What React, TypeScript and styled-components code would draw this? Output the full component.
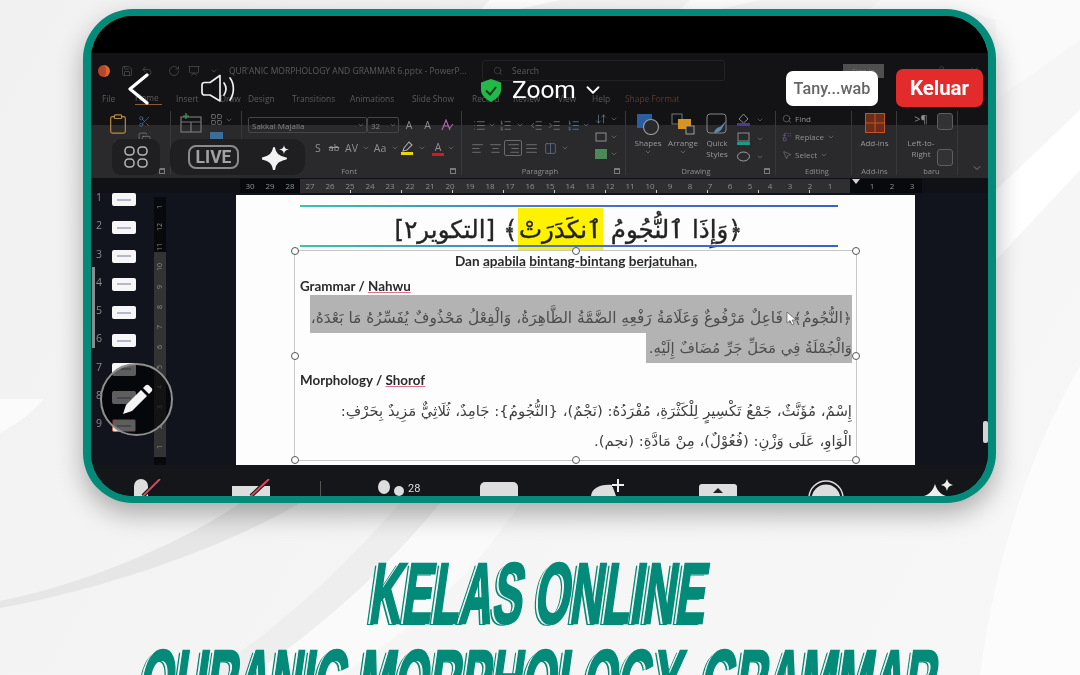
import React from "react";
import styled, { createGlobalStyle } from "styled-components";
import { Save, Undo2, RotateCw, Presentation, Search, ChevronDown, Clipboard, Scissors, Copy, LayoutGrid, AlignLeft, AlignCenter, AlignRight, AlignJustify, List, ListOrdered, IndentIncrease, IndentDecrease, ArrowDownUp, Columns2, Replace, MousePointer2, X, User } from "lucide-react";

const Global = createGlobalStyle`
  html, body { margin: 0; padding: 0; width: 1080px; height: 675px; overflow: hidden; background: #f5f5f5; }
  body { font-family: "Roboto", "Liberation Sans", sans-serif; }
  * { box-sizing: border-box; }
`;

const Page = styled.div`
  position: relative; width: 1080px; height: 675px; overflow: hidden;
  background: linear-gradient(120deg, #f1f1f1 0%, #f5f5f5 50%, #f7f7f7 100%);
`;
const Swooshes = styled.svg`position: absolute; inset: 0; width: 1080px; height: 675px;`;
const Content = styled.div`
  position: relative; display: flex; flex-direction: column; align-items: flex-start;
  padding: 9px 0 0 83px; height: 675px;
`;
const Frame = styled.section`
  position: relative; width: 913px; height: 494px; flex: none;
  border-style: solid; border-color: #038a78; border-width: 7px 8px; border-radius: 50px; background: #000;
  box-shadow: 0 11px 26px rgba(0,0,0,.3);
  overflow: hidden;
`;
const Video = styled.div`
  position: relative; display: flex; flex-direction: column; height: 100%; filter: blur(.5px);
  font-family: "Open Sans", "Liberation Sans", sans-serif;
`;
const TopBlack = styled.div`height: 37px; flex: none; background: #000;`;
const TitleBar = styled.div`
  height: 35px; flex: none; background: #131316; display: flex; align-items: center;
  padding-left: 7px; color: #5b5b5d; font-size: 8.5px;
`;
const AppDot = styled.span`
  width: 12px; height: 12px; border-radius: 50%; background: #b8452a; flex: none; margin-right: 11px;
  border-right: 4px solid #d9672a;
`;
const Qat = styled.div`display: flex; align-items: center; width: 108px; flex: none;`;
const QatItem = styled.span<{ $w: number }>`width: ${p => p.$w}px; flex: none; display: flex;`;
const DocTitle = styled.span`width: 253px; flex: none; white-space: nowrap;`;
const SearchBox = styled.div`
  width: 243px; height: 21px; flex: none; border: 1px solid #232326; border-radius: 3px;
  display: flex; align-items: center; gap: 9px; padding-left: 10px;
`;
const SignIn = styled.span`
  margin-left: 118px; width: 41px; height: 14px; background: #4f4f50; color: #77777a; flex: none;
  display: flex; align-items: center; justify-content: center; font-size: 7.5px;
`;
const WindowIcons = styled.span`margin-left: 52px; display: flex; gap: 22px; align-items: center; color: #4a4a4c;`;
const Tabs = styled.div`
  height: 20px; flex: none; background: #131316; display: flex; align-items: center;
  padding-left: 11px; font-size: 8.4px; white-space: nowrap;
`;
const Tab = styled.span<{ $w: number; $orange?: boolean }>`
  width: ${p => p.$w}px; flex: none; line-height: 13px;
  color: ${p => (p.$orange ? "#5d3a28" : "#5b5b5e")};
`;
const ActiveLabel = styled.span`display: inline-block; border-bottom: 1px solid #8a5a30; line-height: 12px; padding-right: 3px;`;
const Ribbon = styled.div`
  height: 70px; flex: none; display: flex;
  background: linear-gradient(#131316 0, #131316 17px, #2a2a2c 17px, #2a2a2c 100%);
  color: #909092; font-size: 8px;
`;
const Group = styled.div<{ $w: number; $pl?: number }>`
  width: ${p => p.$w}px; flex: none; display: flex; flex-direction: column; position: relative;
  padding: 5px 0 0 ${p => p.$pl ?? 0}px;
  &::after { content: ""; position: absolute; right: 0; top: 3px; bottom: 3px; width: 1px; background: #38383a; }
`;
const GroupBody = styled.div`flex: 1; min-height: 0; display: flex; align-items: flex-start;`;
const GroupName = styled.div<{ $pr?: number }>`
  height: 13px; line-height: 12px; text-align: center; color: #8e8e90; font-size: 7.5px; flex: none; padding-right: ${p => p.$pr ?? 0}px;
`;
const Launcher = styled.span`
  position: absolute; right: 6px; bottom: 4px; width: 6px; height: 6px; border: 1px solid #7a7a7c; border-top-width: 2px;
`;
const Stack = styled.div<{ $gap?: number; $w?: number; $mt?: number; $ml?: number }>`
  display: flex; flex-direction: column; align-items: flex-start; flex: none;
  gap: ${p => p.$gap ?? 0}px; width: ${p => (p.$w ? `${p.$w}px` : "auto")};
  margin-top: ${p => p.$mt ?? 0}px; margin-left: ${p => p.$ml ?? 0}px;
`;
const Row = styled.div<{ $gap?: number; $mt?: number; $ml?: number }>`
  display: flex; align-items: center; white-space: nowrap; flex: none;
  gap: ${p => p.$gap ?? 0}px; margin-top: ${p => p.$mt ?? 0}px; margin-left: ${p => p.$ml ?? 0}px;
`;
const Cell = styled.span<{ $w: number; $boxed?: boolean }>`
  width: ${p => p.$w}px; height: 16px; flex: none; display: flex; align-items: center; justify-content: center; flex-direction: column;
  font-size: 10.5px; line-height: 12px;
  border: ${p => (p.$boxed ? "1px solid #6a6a6c" : "0")}; border-radius: 2px;
`;
const Strike = styled.span`text-decoration: line-through; color: #9a9a9c; font-size: 9px;`;
const BigTool = styled.div<{ $w: number }>`
  width: ${p => p.$w}px; flex: none; display: flex; flex-direction: column; align-items: center; line-height: 11px; text-align: center; color: #98989a;
`;
const IconBox = styled.div`height: 24px; display: flex; align-items: flex-start; justify-content: center; flex: none;`;
const Field = styled.div<{ $w: number }>`
  width: ${p => p.$w}px; height: 16px; border: 1px solid #454547; border-radius: 2px; color: #848486; flex: none;
  display: flex; align-items: center; padding: 0 1px 0 3px; font-size: 8px; justify-content: space-between;
`;
const Swatch = styled.span<{ $c: string }>`display: block; width: 12px; height: 3px; background: ${p => p.$c};`;
const Ltr = styled.span`font-size: 11px; color: #8d8d8f;`;
const OutlineBox = styled.span<{ $h: number }>`
  width: 16px; height: ${p => p.$h}px; border: 1px solid #5e5e60; border-radius: 3px; display: block; background: #323234;
`;
const RibbonEnd = styled.div`flex: 1; display: flex; justify-content: flex-end; align-items: flex-end; padding: 0 5px 4px 0; color: #8e8e90;`;
const Ruler = styled.div`
  height: 15px; flex: none; background: #0f1116; display: flex; align-items: center; padding-left: 149px; color: #8f8f8f; font-size: 8px;
`;
const RulerPart = styled.div<{ $w: number; $light?: boolean }>`
  width: ${p => p.$w}px; height: 14px; flex: none; display: flex; align-items: center;
  background: ${p => (p.$light
    ? "repeating-linear-gradient(90deg, transparent 0 50px, #c8c8c8 50px 51px) bottom / 100% 3px no-repeat, #2f2f31"
    : "#08090c")};
`;
const RulerNum = styled.span`width: 20px; flex: none; text-align: center;`;
const RulerMark = styled.span`width: 12px; flex: none; height: 14px; background: #08090c; display: flex; justify-content: center;`;
const RulerTri = styled.span`width: 0; height: 0; border: 4px solid transparent; border-top: 5px solid #d2d2d2;`;
const Main = styled.div`flex: 1; min-height: 0; background: #11141c; display: flex; position: relative;`;
const Thumbs = styled.div`
  width: 63px; flex: none; display: flex; flex-direction: column; gap: 15.3px; padding-left: 5px;
`;
const ThumbRow = styled.div`
  display: flex; align-items: center; gap: 9px; color: #8c8c8e; font-size: 10.5px; height: 13px; line-height: 13px;
`;
const ThumbNum = styled.span`width: 7px; margin-top: -4px;`;
const Thumb = styled.span<{ $sel: boolean }>`
  width: 24px; height: 13px; border-radius: 2px; background: #f6f6f6;
  border: ${p => (p.$sel ? "1.5px solid #e0603f" : "0")};
  display: flex; align-items: center; justify-content: center;
`;
const ThumbMark = styled.span`width: 14px; height: 2px; background: #b7b7cc;`;
const VRuler = styled.div`
  width: 12px; flex: none; margin-top: 4px; height: 268px;
  background: linear-gradient(#08090c 0, #08090c 55px, #333335 55px, #333335 260px, #08090c 260px);
  color: #8a8a8a; font-size: 7px; display: flex; flex-direction: column; align-items: center; justify-content: space-around; padding-bottom: 8px;
`;
const VNum = styled.span`transform: rotate(-90deg); height: 10px; line-height: 10px;`;
const Gutter = styled.div`width: 70px; flex: none;`;
const Slide = styled.div`
  width: 679px; height: 270px; margin-top: 2px; flex: none; background: #fdfdfd; position: relative; overflow: hidden;
  display: flex; flex-direction: column; padding: 10px 77px 0 64px; color: #1d1d1d;
`;
const GradLine = styled.div`
  height: 2px; flex: none; width: 538px; background: linear-gradient(90deg, #35c8a8, #4a6fd0 50%, #3a62cc);
`;
const VerseRow = styled.div`
  height: 38px; flex: none; width: 538px; display: flex; align-items: center; justify-content: center; padding-top: 8px;
  font-family: "DejaVu Sans", sans-serif; font-size: 24.5px; direction: rtl; white-space: nowrap; color: #232323; line-height: 30px;
  -webkit-text-stroke: .35px #232323;
`;
const Mark = styled.mark`background: #fff200; color: inherit; padding: 7px 1px 7px;`;
const TextBox = styled.div`
  position: relative; margin: 3px 0 0 -6px; width: 563px; height: 211px; flex: none; border: 1px solid #c8c8c8;
  padding: 2px 4px 0 5px; font-family: "Lato", "Liberation Sans", sans-serif;
  display: flex; flex-direction: column;
`;
const Handle = styled.span<{ $x: string; $y: string }>`
  position: absolute; left: ${p => p.$x}; top: ${p => p.$y}; width: 8px; height: 8px; margin: -4px 0 0 -4px;
  border-radius: 50%; background: #fff; border: 1px solid #555; z-index: 1;
`;
const Center = styled.div`text-align: center; font-weight: 700; font-size: 13.6px; line-height: 16px; color: #2a2a2a;`;
const Heading = styled.div`font-weight: 700; font-size: 13.4px; line-height: 16px; margin-top: 9px; color: #2a2a2a;`;
const Squiggle = styled.span`text-decoration: underline; text-decoration-color: #d9748a; text-underline-offset: 1px;`;
const ArabicBlock = styled.div<{ $mt: number }>`
  font-family: "DejaVu Sans", sans-serif; direction: rtl; text-align: right; font-size: 14.9px; white-space: nowrap;
  margin-top: ${p => p.$mt}px; display: flex; flex-direction: column; align-items: flex-start;
`;
const ArabicLine = styled.div<{ $h?: boolean; $w: number; $height: number; $lh: number; $fs?: number }>`
  height: ${p => p.$height}px; line-height: ${p => p.$lh}px; width: ${p => p.$w}px;
  font-size: ${p => p.$fs ?? 14.9}px;
  background: ${p => (p.$h ? "#b3b3b3" : "transparent")};
  color: ${p => (p.$h ? "#4d4d4d" : "#3f3f3f")};
  overflow: hidden; flex: none;
`;
const Cursor = styled.svg`position: absolute; left: 550px; top: 116px;`;
const RightRail = styled.div`flex: 1; position: relative;`;
const ScrollThumb = styled.span`
  position: absolute; right: 0; top: 228px; width: 5px; height: 22px; background: #d4d4d4; border-radius: 2px;
`;
const LeftHandle = styled.span`position: absolute; left: 1px; top: 74px; width: 3px; height: 81px; background: #8b8b8d;`;
const BottomBar = styled.div`height: 31px; flex: none; background: #14161a; position: relative; overflow: hidden;`;
const ToolSlot = styled.div<{ $x: number }>`position: absolute; left: ${p => p.$x}px; top: 14px; line-height: 0;`;
const Sep = styled.span`position: absolute; left: 229px; top: 16px; width: 1px; height: 15px; background: #555;`;
const Count = styled.span`position: absolute; left: 317px; top: 17px; font-size: 11px; line-height: 13px; color: #ddd; font-family: "Roboto", sans-serif;`;

const BackButton = styled.span`position: absolute; left: 37px; top: 57px; line-height: 0;`;
const Speaker = styled.span`position: absolute; left: 110px; top: 58px; line-height: 0;`;
const ZoomLabel = styled.div`
  position: absolute; left: 390px; top: 56px; display: flex; align-items: center;
  color: #fff; font-family: "Roboto", sans-serif; font-size: 24.5px; line-height: 36px; height: 36px;
`;
const ZoomText = styled.span`margin: 0 6px 0 11px;`;
const QaButton = styled.div`
  position: absolute; left: 695px; top: 55px; width: 92px; height: 35px; background: #fff; border-radius: 7px;
  color: #666; font-family: "Roboto", sans-serif; font-weight: 500; font-size: 16.2px;
  display: flex; align-items: center; justify-content: center;
`;
const ExitButton = styled.div`
  position: absolute; left: 805px; top: 53px; width: 87px; height: 38px; background: #e32b2b; border-radius: 7px;
  color: #fff; font-family: "Roboto", sans-serif; font-weight: 700; font-size: 20.5px;
  display: flex; align-items: center; justify-content: center;
`;
const GridButton = styled.div`
  position: absolute; left: 21px; top: 123px; width: 48px; height: 36px; background: #1f1f21; border-radius: 9px;
  display: flex; align-items: center; justify-content: center;
`;
const LivePill = styled.div`
  position: absolute; left: 79px; top: 123px; width: 135px; height: 36px; background: #1f1f21; border-radius: 12px;
  display: flex; align-items: center; padding-left: 18px; gap: 23px;
`;
const LiveTag = styled.span`
  width: 51px; height: 24px; border: 2px solid #8b8b8b; border-radius: 8px; color: #a2a2a2;
  font-family: "Roboto", sans-serif; font-weight: 700; font-size: 17.5px; display: flex; align-items: center; justify-content: center;
`;
const PenCircle = styled.div`
  position: absolute; left: 9px; top: 347px; width: 73px; height: 73px; border-radius: 50%;
  border: 2px solid #8f8f8f; background: rgba(0,0,0,.62);
  display: flex; align-items: center; justify-content: center;
`;

const Heads = styled.div`
  flex: 1; margin-left: -83px; display: flex; flex-direction: column; align-items: center; width: 1080px;
  padding-top: 47px;
`;
const Headline = styled.div<{ $w: number; $sx: number }>`
  width: ${p => p.$w}px; height: 87px; flex: none; text-align: center; white-space: nowrap;
  font-family: "Liberation Sans", sans-serif; font-weight: 700; font-size: 86px; line-height: 87px;
  color: #038a78; transform: skewX(-8deg) scaleX(${p => p.$sx});
  -webkit-text-stroke: 2.4px #038a78;
  text-shadow: -4.5px 1px 0 #f8f8f8, -7px 2px 0 #038a78;
`;

const Arr = () => <ChevronDown size={8} strokeWidth={1.5} />;
const ic = { size: 13, strokeWidth: 1.2 };

const rulerA = ["30","29","28"];
const rulerB = ["27","26","25","24","23","22","21","20","19","18","17","16","15","14","13","12","11","10","9","8","7","6","5","4","3","2","1"];
const rulerC = ["1","2","3"];
const vNums = ["1","12","11","10","9","8","7","6","5","4","3","2","1"];

export default function App() {
  return (
    <Page>
      <Global />
      <Swooshes viewBox="0 0 1080 675" aria-hidden="true">
        <path d="M0 399 L44 399 C30 415 15 425 0 433Z" fill="#fbfbfb" />
        <path d="M0 601 C80 585 180 545 240 503 L300 503 C220 550 100 590 0 608Z" fill="#e6e6e6" />
        <path d="M205 675 C280 630 350 560 400 503 L440 503 C390 570 320 630 250 675Z" fill="#eeeeee" />
        <path d="M250 675 C320 630 390 565 440 503 L520 503 C470 580 400 640 340 675Z" fill="#fafafa" />
        <path d="M490 0 L560 0 L515 10 L480 10Z" fill="#ffffff" />
        <path d="M690 0 L760 0 L720 9 L680 9Z" fill="#fdfdfd" />
        <path d="M880 0 L1080 0 L1080 40 L996 100 L996 20 L960 9 L870 9Z" fill="#fafafa" />
        <path d="M996 190 L1080 110 L1080 170 L996 260Z" fill="#ffffff" />
        <path d="M1080 366 C1030 450 995 560 980 675 L1080 675Z" fill="#fcfcfc" />
      </Swooshes>
      <Content>
        <Frame>
          <Video>
            <TopBlack />
            <TitleBar>
              <AppDot />
              <Qat>
                <QatItem $w={20}><Save size={12} strokeWidth={1.2} /></QatItem>
                <QatItem $w={27}><Undo2 size={12} strokeWidth={1.2} /></QatItem>
                <QatItem $w={20}><RotateCw size={12} strokeWidth={1.2} /></QatItem>
                <QatItem $w={22}><Presentation size={12} strokeWidth={1.2} /></QatItem>
                <QatItem $w={10}><ChevronDown size={8} /></QatItem>
              </Qat>
              <DocTitle>QUR'ANIC MORPHOLOGY AND GRAMMAR 6.pptx  -  PowerP...</DocTitle>
              <SearchBox><Search size={10} strokeWidth={1.2} />Search</SearchBox>
              <SignIn>Sign in</SignIn>
              <WindowIcons><User size={11} strokeWidth={1.4} /><X size={11} strokeWidth={1.4} /></WindowIcons>
            </TitleBar>
            <Tabs>
              <Tab $w={33}>File</Tab>
              <Tab $w={41}><ActiveLabel>Home</ActiveLabel></Tab>
              <Tab $w={44}>Insert</Tab>
              <Tab $w={28}>Draw</Tab>
              <Tab $w={44}>Design</Tab>
              <Tab $w={58}>Transitions</Tab>
              <Tab $w={62}>Animations</Tab>
              <Tab $w={60}>Slide Show</Tab>
              <Tab $w={41}>Record</Tab>
              <Tab $w={45}>Review</Tab>
              <Tab $w={34}>View</Tab>
              <Tab $w={33}>Help</Tab>
              <Tab $w={62} $orange>Shape Format</Tab>
            </Tabs>
            <Ribbon>
              <Group $w={80} $pl={15}>
                <GroupBody>
                  <BigTool $w={24}>
                    <IconBox><Clipboard size={22} color="#b98a3c" strokeWidth={1.3} /></IconBox>
                    <span>Pr</span>
                  </BigTool>
                  <Stack $gap={4} $ml={8} $mt={2}><Scissors {...ic} color="#4a78a8" /><Copy {...ic} /></Stack>
                </GroupBody>
                <GroupName />
                <Launcher />
              </Group>
              <Group $w={71} $pl={9}>
                <GroupBody>
                  <svg width="22" height="20" viewBox="0 0 22 20" fill="none" stroke="#77777a" strokeWidth="1.2"><rect x="1" y="4" width="20" height="15" /><path d="M1 9H21M11 9V19" /><path d="M6 0V6M3 3H9" stroke="#3f9a58" /></svg>
                  <Stack $gap={6} $ml={8}>
                    <Row $gap={2}><LayoutGrid {...ic} /><Arr /></Row>
                    <svg width="13" height="12" viewBox="0 0 13 12"><rect width="13" height="12" fill="#3a6f9a" /></svg>
                  </Stack>
                </GroupBody>
                <GroupName />
              </Group>
              <Group $w={220} $pl={6}>
                <GroupBody>
                  <Stack $mt={4}>
                    <Row>
                      <Field $w={119}>Sakkal Majalla<Arr /></Field>
                      <Field $w={32}>32<Arr /></Field>
                      <Cell $w={20}>A</Cell>
                      <Cell $w={17}>A</Cell>
                      <Cell $w={22}><svg width="13" height="12" viewBox="0 0 13 12" fill="none" stroke="#b06ab0" strokeWidth="1.1"><path d="M1 11 L5 1 L9 11 M3 7H7 M8 10 L12 5" /></svg></Cell>
                    </Row>
                    <Row $mt={7} $ml={63}>
                      <Cell $w={14}>S</Cell>
                      <Cell $w={18}><Strike>ab</Strike></Cell>
                      <Cell $w={17}>AV</Cell>
                      <Cell $w={11}><Arr /></Cell>
                      <Cell $w={18}>Aa</Cell>
                      <Cell $w={11}><Arr /></Cell>
                      <Cell $w={14}>
                        <svg width="12" height="11" viewBox="0 0 12 11" fill="none" stroke="#a8a8aa" strokeWidth="1.1"><path d="M2 10 L3 7 L8 1 L11 4 L6 9Z" /></svg>
                        <Swatch $c="#e8d800" />
                      </Cell>
                      <Cell $w={16}><Arr /></Cell>
                      <Cell $w={16}><span>A</span><Swatch $c="#d81818" /></Cell>
                      <Cell $w={10}><Arr /></Cell>
                    </Row>
                  </Stack>
                </GroupBody>
                <GroupName $pr={12}>Font</GroupName>
                <Launcher />
              </Group>
              <Group $w={164} $pl={6}>
                <GroupBody>
                  <Stack $w={127} $mt={4}>
                    <Row $ml={4}>
                      <Cell $w={14}><List {...ic} /></Cell>
                      <Cell $w={12}><Arr /></Cell>
                      <Cell $w={14}><ListOrdered {...ic} /></Cell>
                      <Cell $w={16}><Arr /></Cell>
                      <Cell $w={16}><IndentDecrease {...ic} /></Cell>
                      <Cell $w={20}><IndentIncrease {...ic} /></Cell>
                      <Cell $w={18}><ListOrdered {...ic} color="#6a90b8" /></Cell>
                      <Cell $w={8}><Arr /></Cell>
                    </Row>
                    <Row $mt={7}>
                      <Cell $w={18}><AlignLeft {...ic} /></Cell>
                      <Cell $w={18}><AlignCenter {...ic} /></Cell>
                      <Cell $w={18} $boxed><AlignRight {...ic} /></Cell>
                      <Cell $w={18}><AlignJustify {...ic} /></Cell>
                      <Cell $w={20}><Columns2 {...ic} color="#5b87b0" /></Cell>
                      <Cell $w={10}><Arr /></Cell>
                    </Row>
                  </Stack>
                  <Stack $gap={6}>
                    <Row $gap={3}><ArrowDownUp size={12} strokeWidth={1.2} color="#7c93ad" /><Arr /></Row>
                    <Row $gap={3}><svg width="12" height="12" viewBox="0 0 12 12" fill="none" stroke="#8e8e90"><rect x="1" y="2" width="10" height="8" /></svg><Arr /></Row>
                    <Row $gap={3}><svg width="12" height="10" viewBox="0 0 12 10"><rect width="12" height="10" fill="#4a8a58" /></svg><Arr /></Row>
                  </Stack>
                </GroupBody>
                <GroupName $pr={14}>Paragraph</GroupName>
                <Launcher />
              </Group>
              <Group $w={150} $pl={6}>
                <GroupBody>
                  <BigTool $w={32}>
                    <IconBox>
                      <svg width="24" height="22" viewBox="0 0 24 22" fill="none"><rect x="1" y="1" width="15" height="14" fill="#2b5ea0" /><circle cx="15" cy="14" r="7.5" fill="#2a2a2c" stroke="#9a9a9c" strokeWidth="1.2" /></svg>
                    </IconBox>
                    <span>Shapes</span><Arr />
                  </BigTool>
                  <BigTool $w={38}>
                    <IconBox>
                      <svg width="24" height="22" viewBox="0 0 24 22" fill="none"><rect x="1" y="1" width="10" height="10" stroke="#77777a" /><rect x="7" y="6" width="13" height="10" fill="#d8941f" /><rect x="15" y="13" width="8" height="8" stroke="#a0a0a2" fill="#2a2a2c" /></svg>
                    </IconBox>
                    <span>Arrange</span><Arr />
                  </BigTool>
                  <BigTool $w={30}>
                    <IconBox>
                      <svg width="22" height="22" viewBox="0 0 22 22" fill="none"><rect x="1" y="1" width="19" height="19" rx="3" stroke="#87878a" /><path d="M8 20 C9 15 13 14 14 14 L21 7 L15 17 C13 19 11 20 8 20Z" fill="#5e89ad" /></svg>
                    </IconBox>
                    <span>Quick<br />Styles</span>
                  </BigTool>
                  <Stack $gap={6} $ml={5}>
                    <Row $gap={6}><svg width="13" height="13" viewBox="0 0 13 13"><path d="M6.5 1 L11 6 L6.5 10 L2 6Z" fill="none" stroke="#8a8a8c" /><rect y="10" width="13" height="3" fill="#4b3a90" /></svg><Arr /></Row>
                    <Row $gap={6}><svg width="13" height="13" viewBox="0 0 13 13" fill="none"><rect x="1" y="1" width="11" height="8" stroke="#8a8a8c" /><rect y="10" width="13" height="3" fill="#1c9a88" /></svg><Arr /></Row>
                    <Row $gap={6}><svg width="13" height="11" viewBox="0 0 13 11"><ellipse cx="6.5" cy="5.5" rx="6" ry="4.5" fill="none" stroke="#a0a0a2" /></svg><Arr /></Row>
                  </Stack>
                </GroupBody>
                <GroupName $pr={16}>Drawing</GroupName>
                <Launcher />
              </Group>
              <Group $w={76} $pl={6}>
                <GroupBody>
                  <Stack $gap={7}>
                    <Row $gap={3}><Search size={10} strokeWidth={1.2} />Find</Row>
                    <Row $gap={3}><Replace size={10} strokeWidth={1.2} color="#8a70c0" />Replace<Arr /></Row>
                    <Row $gap={3}><MousePointer2 size={10} strokeWidth={1.2} />Select<Arr /></Row>
                  </Stack>
                </GroupBody>
                <GroupName>Editing</GroupName>
              </Group>
              <Group $w={45}>
                <GroupBody>
                  <BigTool $w={45}>
                    <IconBox>
                      <svg width="20" height="20" viewBox="0 0 20 20"><rect width="20" height="20" fill="#6d2c18" /><path d="M10 0V20M0 10H20" stroke="#c0552c" /><rect x=".5" y=".5" width="19" height="19" fill="none" stroke="#c0552c" /></svg>
                    </IconBox>
                    <span>Add-ins</span>
                  </BigTool>
                </GroupBody>
                <GroupName>Add-ins</GroupName>
              </Group>
              <Group $w={61} $pl={8}>
                <GroupBody>
                  <BigTool $w={32}>
                    <IconBox><Ltr>&gt;¶</Ltr></IconBox>
                    <span>Left-to-<br />Right</span>
                  </BigTool>
                  <Stack $gap={19}>
                    <OutlineBox $h={17} />
                    <OutlineBox $h={17} />
                  </Stack>
                </GroupBody>
                <GroupName>baru</GroupName>
              </Group>
              <RibbonEnd><ChevronDown size={12} strokeWidth={1.6} /></RibbonEnd>
            </Ribbon>
            <Ruler>
              <RulerPart $w={60}>{rulerA.map(n => <RulerNum key={n}>{n}</RulerNum>)}</RulerPart>
              <RulerPart $w={550} $light>{rulerB.map(n => <RulerNum key={n}>{n}</RulerNum>)}</RulerPart>
              <RulerMark><RulerTri /></RulerMark>
              <RulerPart $w={60}>{rulerC.map(n => <RulerNum key={n}>{n}</RulerNum>)}</RulerPart>
            </Ruler>
            <Main>
              <LeftHandle />
              <Thumbs>
                {[1,2,3,4,5,6,7,8,9].map(n => (
                  <ThumbRow key={n}>
                    <ThumbNum>{n}</ThumbNum>
                    <Thumb $sel={n === 9}><ThumbMark /></Thumb>
                  </ThumbRow>
                ))}
              </Thumbs>
              <VRuler>{vNums.map((n, i) => <VNum key={i}>{n}</VNum>)}</VRuler>
              <Gutter />
              <Slide>
                <GradLine />
                <VerseRow>
                  <span>﴿وَإِذَا ٱلنُّجُومُ <Mark>ٱنكَدَرَتْ</Mark>﴾ [التكوير٢]</span>
                </VerseRow>
                <GradLine />
                <TextBox>
                  <Handle $x="0" $y="0" /><Handle $x="50%" $y="0" /><Handle $x="100%" $y="0" />
                  <Handle $x="0" $y="50%" /><Handle $x="100%" $y="50%" />
                  <Handle $x="0" $y="100%" /><Handle $x="50%" $y="100%" /><Handle $x="100%" $y="100%" />
                  <Center>Dan <Squiggle>apabila</Squiggle> <Squiggle>bintang-bintang</Squiggle> <Squiggle>berjatuhan</Squiggle>,</Center>
                  <Heading>Grammar / <Squiggle>Nahwu</Squiggle></Heading>
                  <ArabicBlock $mt={1}>
                    <ArabicLine $h $w={542} $height={38} $lh={46} $fs={15.4}>﴿النُّجُومُ﴾: فَاعِلٌ مَرْفُوعٌ وَعَلَامَةُ رَفْعِهِ الضَّمَّةُ الظَّاهِرَةُ، وَالْفِعْلُ مَحْذُوفٌ يُفَسِّرُهُ مَا بَعْدَهُ،</ArabicLine>
                    <ArabicLine $h $w={206} $height={30} $lh={30}>وَالْجُمْلَةُ فِي مَحَلِّ جَرِّ مُضَافٌ إِلَيْهِ.</ArabicLine>
                  </ArabicBlock>
                  <Heading>Morphology / <Squiggle>Shorof</Squiggle></Heading>
                  <ArabicBlock $mt={8}>
                    <ArabicLine $w={551} $height={30} $lh={30}>إِسْمٌ، مُؤَنَّثٌ، جَمْعُ تَكْسِيرٍ لِلْكَثْرَةِ، مُفْرَدُهُ: (نَجْمٌ)، {"{"}النُّجُومُ{"}"}: جَامِدٌ، ثُلَاثِيٌّ مَزِيدٌ بِحَرْفِ:</ArabicLine>
                    <ArabicLine $w={551} $height={30} $lh={30}>الْوَاوِ، عَلَى وَزْنِ: (فُعُوْلٌ)، مِنْ مَادَّةِ: (نجم).</ArabicLine>
                  </ArabicBlock>
                </TextBox>
                <Cursor width="11" height="15" viewBox="0 0 11 15"><path d="M1 1 L1 12 L4 9.5 L6 14 L8 13 L6 9 L10 9Z" fill="#fff" stroke="#555" strokeWidth=".7" /></Cursor>
              </Slide>
              <RightRail><ScrollThumb /></RightRail>
            </Main>
            <BottomBar>
              <ToolSlot $x={43}><svg width="28" height="17" viewBox="0 0 28 17"><rect x="0" y="0" width="14" height="24" rx="7" fill="#ddd" /><path d="M9 17 L26 0" stroke="#14161a" strokeWidth="4" /><path d="M9 17 L26 0" stroke="#d9475a" strokeWidth="2" /></svg></ToolSlot>
              <ToolSlot $x={141}><svg width="40" height="17" viewBox="0 0 40 17"><rect x="0" y="7" width="38" height="14" fill="#ddd" /><path d="M19 17 L37 0" stroke="#14161a" strokeWidth="4" /><path d="M19 17 L37 0" stroke="#d9475a" strokeWidth="2" /></svg></ToolSlot>
              <Sep />
              <ToolSlot $x={287}><svg width="28" height="17" viewBox="0 0 28 17"><ellipse cx="6" cy="8" rx="6" ry="7" fill="#ddd" /><ellipse cx="21" cy="12" rx="5" ry="5" fill="#ddd" /></svg></ToolSlot>
              <Count>28</Count>
              <ToolSlot $x={389}><svg width="38" height="17" viewBox="0 0 38 17"><rect x="0" y="3" width="38" height="20" rx="5" fill="#ddd" /></svg></ToolSlot>
              <ToolSlot $x={499}><svg width="40" height="17" viewBox="0 0 40 17"><path d="M1 17 C2 9 10 5 22 6 L26 17Z" fill="#ddd" /><path d="M28 0 V13 M22 6 H34" stroke="#14161a" strokeWidth="4" /><path d="M28 0 V13 M22 6 H34" stroke="#eee" strokeWidth="2" /></svg></ToolSlot>
              <ToolSlot $x={608}><svg width="38" height="17" viewBox="0 0 38 17"><rect x="0" y="5" width="38" height="18" rx="3" fill="#ddd" /><path d="M19 9 L14 14 H24Z" fill="#222" /></svg></ToolSlot>
              <ToolSlot $x={717}><svg width="36" height="17" viewBox="0 0 36 17"><circle cx="18" cy="19" r="17" fill="none" stroke="#ddd" strokeWidth="1.5" /><circle cx="18" cy="20" r="14.5" fill="#ddd" /></svg></ToolSlot>
              <ToolSlot $x={833}><svg width="36" height="17" viewBox="0 0 36 17"><path d="M0 17 C6 15 9 11 11 5 C13 11 16 15 22 17Z" fill="#eee" /><path d="M23 0 C24 3 25 5 29 6 C25 7 24 8 23 12 C22 8 21 7 17 6 C21 5 22 3 23 0Z" fill="#eee" /></svg></ToolSlot>
            </BottomBar>
            <BackButton><svg width="21" height="32" viewBox="0 0 21 32" fill="none" stroke="#fff" strokeWidth="3.2" strokeLinecap="round" strokeLinejoin="round"><path d="M19 2 L2 16 L19 30" /></svg></BackButton>
            <Speaker><svg width="36" height="30" viewBox="0 0 36 30" fill="none" stroke="#eee" strokeWidth="1.7" strokeLinejoin="round" strokeLinecap="round"><path d="M1 11 C1 9.5 2 8.5 3.5 8.5 H9 L19 1.5 V27 L9 21 H3.5 C2 21 1 20 1 18.5Z" /><path d="M23 9 C25.5 12.5 25.5 17 23 21" /><path d="M29 4 C33.5 10 33.5 19.5 29 26" /></svg></Speaker>
            <ZoomLabel>
              <svg width="20" height="23" viewBox="0 0 20 23"><path d="M10 0 L20 3.5 V11 C20 17 14 20.5 10 23 C6 20.5 0 17 0 11 V3.5Z" fill="#22b84a" /><path d="M5 11.5 L9 15.5 L15 8" fill="none" stroke="#0a3a16" strokeWidth="2" /></svg>
              <ZoomText>Zoom</ZoomText>
              <ChevronDown size={22} strokeWidth={2} />
            </ZoomLabel>
            <QaButton>Tany...wab</QaButton>
            <ExitButton>Keluar</ExitButton>
            <GridButton>
              <svg width="24" height="24" viewBox="0 0 24 24" fill="none" stroke="#b5b5b5" strokeWidth="1.5"><rect x="1" y="2" width="9" height="8" rx="3.5" /><rect x="14" y="2" width="9" height="8" rx="3.5" /><rect x="1" y="14" width="9" height="8" rx="3.5" /><rect x="14" y="14" width="9" height="8" rx="3.5" /></svg>
            </GridButton>
            <LivePill>
              <LiveTag>LIVE</LiveTag>
              <svg width="27" height="25" viewBox="0 0 27 25" fill="#f2f2f2"><path d="M12 3 C13 9 16 11.5 24 13.5 C16 15.5 13 18 12 25 C11 18 8 15.5 0 13.5 C8 11.5 11 9 12 3Z" stroke="#f2f2f2" strokeWidth="2" strokeLinejoin="round" /><path d="M22 0 C22.5 3 23.5 4 27 4.5 C23.5 5 22.5 6 22 9.5 C21.5 6 20.5 5 17 4.5 C20.5 4 21.5 3 22 0Z" /></svg>
            </LivePill>
            <PenCircle>
              <svg width="32" height="32" viewBox="0 0 32 32" fill="#f4f4f4"><path d="M2 30 L5 21 L20 6 L26 12 L11 27Z" /><path d="M22 4 L24.5 1.5 C25.5 .5 27 .5 28 1.5 L30.5 4 C31.5 5 31.5 6.5 30.5 7.5 L28 10Z" /></svg>
            </PenCircle>
          </Video>
        </Frame>
        <Heads>
          <Headline $w={700} $sx={0.525}>KELAS ONLINE</Headline>
          <Headline $w={1660} $sx={0.513}>QURANIC MORPHOLOGY, GRAMMAR</Headline>
        </Heads>
      </Content>
    </Page>
  );
}
